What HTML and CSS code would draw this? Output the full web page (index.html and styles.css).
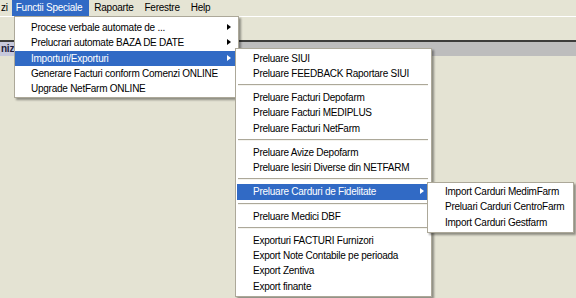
FILE: index.html
```html
<!DOCTYPE html>
<html>
<head>
<meta charset="utf-8">
<link rel="stylesheet" href="styles.css">
</head>
<body>
<div class="app">
  <div class="menubar">
    <span class="mb-item mb-cut">zi</span>
    <span class="mb-item mb-active">Functii Speciale</span>
    <span class="mb-item">Rapoarte</span>
    <span class="mb-item">Ferestre</span>
    <span class="mb-item">Help</span>
  </div>
  <div class="toolbar"></div>
  <div class="child-title"><span class="child-name">niz</span></div>
  <div class="workspace"></div>

  <div class="menu menu-main">
    <div class="mi has-sub">Procese verbale automate de ...</div>
    <div class="mi has-sub">Prelucrari automate BAZA DE DATE</div>
    <div class="mi has-sub sel">Importuri/Exporturi</div>
    <div class="mi">Generare Facturi conform Comenzi ONLINE</div>
    <div class="mi">Upgrade NetFarm ONLINE</div>
  </div>

  <div class="menu menu-sub">
    <div class="mi">Preluare SIUI</div>
    <div class="mi">Preluare FEEDBACK Raportare SIUI</div>
    <div class="sep"></div>
    <div class="mi">Preluare Facturi Depofarm</div>
    <div class="mi">Preluare Facturi MEDIPLUS</div>
    <div class="mi">Preluare Facturi NetFarm</div>
    <div class="sep"></div>
    <div class="mi">Preluare Avize Depofarm</div>
    <div class="mi">Preluare Iesiri Diverse din NETFARM</div>
    <div class="sep"></div>
    <div class="mi has-sub sel">Preluare Carduri de Fidelitate</div>
    <div class="sep"></div>
    <div class="mi">Preluare Medici DBF</div>
    <div class="sep"></div>
    <div class="mi">Exporturi FACTURI Furnizori</div>
    <div class="mi">Export Note Contabile pe perioada</div>
    <div class="mi">Export Zentiva</div>
    <div class="mi">Export finante</div>
  </div>

  <div class="menu menu-subsub">
    <div class="mi">Import Carduri MedimFarm</div>
    <div class="mi">Preluari Carduri CentroFarm</div>
    <div class="mi">Import Carduri Gestfarm</div>
  </div>
</div>
</body>
</html>
```

FILE: styles.css
```css
* { box-sizing: border-box; }
html, body {
  margin: 0;
  padding: 0;
  background: #e4e3d3;
}
.app {
  position: relative;
  width: 576px;
  height: 298px;
  overflow: hidden;
  font-family: "Liberation Sans", Arial, sans-serif;
  font-size: 10px;
  letter-spacing: -0.25px;
  color: #000;
}
.menubar {
  display: flex;
  height: 16px;
  background: #e5e4d4;
  line-height: 16px;
}
.mb-item {
  padding: 0 6px 0 5px;
  white-space: nowrap;
}
.mb-cut {
  padding: 0 4px 0 1px;
}
.mb-active {
  background: #316ac5;
  color: #fff;
  padding: 0 7px 0 4px;
}
.toolbar {
  height: 26px;
  background: #e5e4d4;
  border-top: 1px solid #ffffff;
  border-bottom: 2px solid #3c3c3a;
}
.child-title {
  height: 14px;
  background: #bdbdbd;
  display: flex;
  align-items: center;
}
.child-name {
  height: 14px;
  line-height: 14px;
  padding: 0 1px;
  background: #c7c9dc;
  color: #1b1d3c;
  font-weight: bold;
  font-size: 10px;
}
.workspace {
  height: 240px;
  background: #e4e3d3;
}

.menu {
  position: absolute;
  background: #fff;
  border: 1px solid #aca899;
  box-shadow: 2px 2px 2px rgba(0, 0, 0, 0.38);
}
.menu-main {
  left: 14px;
  top: 16px;
  width: 225px;
  padding: 3px 2px 1px 0;
}
.menu-sub {
  left: 235px;
  top: 48px;
  width: 197px;
  padding: 1.5px 2px 2px 1px;
}
.menu-subsub {
  left: 427px;
  top: 182px;
  width: 147px;
  padding: 1.2px 2px 2px 1px;
}
.mi {
  position: relative;
  height: 15.25px;
  line-height: 15.25px;
  padding-left: 16px;
  white-space: nowrap;
}
.sel {
  background: #316ac5;
  color: #fff;
}
.has-sub::after {
  content: "";
  position: absolute;
  right: 5px;
  top: 4px;
  width: 0;
  height: 0;
  border-top: 3.5px solid transparent;
  border-bottom: 3.5px solid transparent;
  border-left: 4px solid #000;
}
.sel.has-sub::after {
  border-left-color: #fff;
}
.sep {
  height: 9px;
  padding-top: 3px;
}
.sep::before {
  content: "";
  display: block;
  margin: 0 1px;
  height: 1px;
  background: #aca899;
  border-bottom: 1px solid #f4f3ee;
}
```
